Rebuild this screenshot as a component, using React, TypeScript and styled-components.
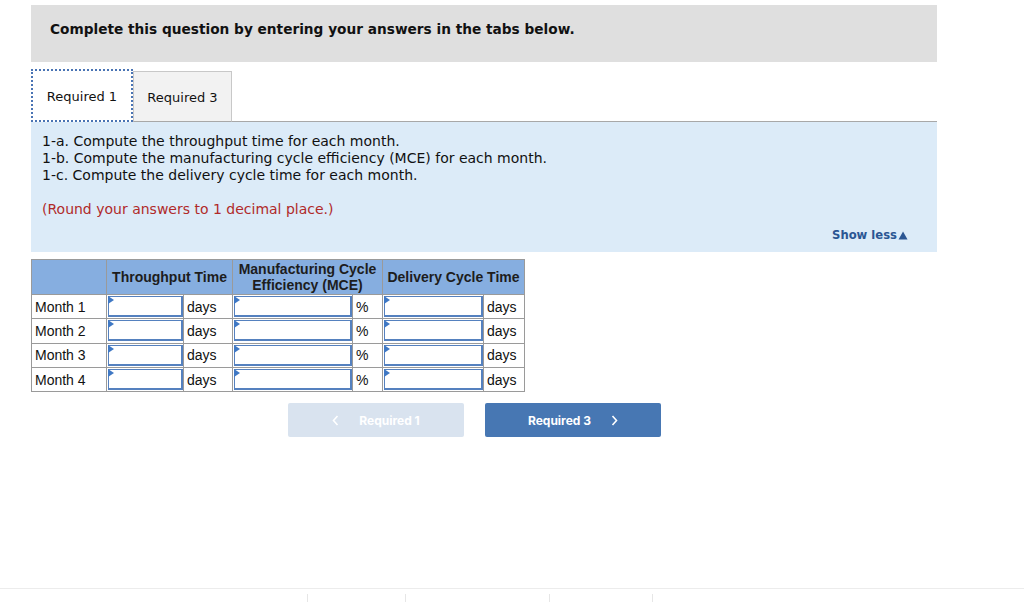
import React from "react";
import styled, { createGlobalStyle } from "styled-components";

const Global = createGlobalStyle`
  html, body { margin: 0; padding: 0; background: #fff; }
  body { font-family: "DejaVu Sans", Verdana, sans-serif; color: #111; }
  * { box-sizing: border-box; }
`;

const Page = styled.div`
  height: 602px;
  display: flex;
  flex-direction: column;
  overflow: hidden;
`;

const Main = styled.div`
  padding: 5px 0 0 31px;
  width: 937px;
  flex: 1;
`;

const Banner = styled.div`
  height: 57px;
  background: #dfdfdf;
  padding: 16px 0 0 19px;
  font-size: 13.7px;
  font-weight: bold;
  line-height: 17px;
  color: #111;
`;

const TabBar = styled.div`
  margin-top: 7px;
  display: flex;
  align-items: flex-end;
  height: 53px;
  border-bottom: 1px solid #a8a8a8;
`;

const Tab = styled.div<{ $active?: boolean }>`
  height: ${(p) => (p.$active ? "53px" : "51px")};
  margin-bottom: -1px;
  display: flex;
  align-items: center;
  justify-content: center;
  font-size: 13px;
  color: #111;
  background: ${(p) => (p.$active ? "#fff" : "#f2f2f2")};
  border: ${(p) => (p.$active ? "2px dotted #4a74b4" : "1px solid #c8c8c8")};
  border-bottom: ${(p) => (p.$active ? "2px dotted #4a74b4" : "1px solid #a8a8a8")};
  width: ${(p) => (p.$active ? "102px" : "99px")};
  padding-top: 2px;
`;

const Panel = styled.div`
  background: #dcebf8;
  height: 130px;
  padding: 11px 29px 0 11px;
  font-size: 14px;
  line-height: 17px;
  display: flex;
  flex-direction: column;
`;

const Line = styled.div``;

const Hint = styled.div`
  margin-top: 17px;
  color: #b02a2a;
`;

const ShowLess = styled.div`
  margin-top: auto;
  margin-bottom: 8px;
  align-self: flex-end;
  font-family: "DejaVu Sans", Verdana, sans-serif;
  font-weight: 700;
  font-size: 11.6px;
  color: #2b5693;
  display: flex;
  align-items: center;
  gap: 1px;
`;

const Table = styled.table`
  margin-top: 7px;
  border-collapse: collapse;
  font-family: "Liberation Sans", Arial, sans-serif;
  font-size: 14px;
  color: #111;
  border: 1px solid #8c8c8c;
`;

const Th = styled.th`
  background: #86aee0;
  border: 1px solid #9a9a9a;
  height: 35px;
  padding: 0 3px;
  font-weight: bold;
  font-size: 14px;
  line-height: 16px;
  color: #1d1d1d;
  text-align: center;
  white-space: nowrap;
`;

const Td = styled.td<{ $w?: number }>`
  border: 1px solid #9a9a9a;
  height: 24.3px;
  padding: 0 3px;
  width: ${(p) => (p.$w ? `${p.$w}px` : "auto")};
  white-space: nowrap;
  line-height: 16px;
`;

const InputTd = styled.td<{ $w: number }>`
  border: 1px solid #9a9a9a;
  width: ${(p) => p.$w}px;
  padding: 1px 0 1px 1px;
  height: 24.3px;
`;

const InputBox = styled.div`
  position: relative;
  height: 21px;
  border: 2px solid #5581bf;
  border-top-width: 1px;
  border-left-width: 1px;
  background: #fff;
`;

const Flag = styled.span`
  position: absolute;
  top: -1px;
  left: -1px;
  width: 0;
  height: 0;
  border-top: 4px solid transparent;
  border-bottom: 4px solid transparent;
  border-left: 6px solid #3f78c4;
`;

const NavRow = styled.div`
  margin-top: 11px;
  padding-left: 257px;
  display: flex;
  gap: 21px;
`;

const NavButton = styled.button<{ $disabled?: boolean }>`
  width: 176px;
  height: 34px;
  border: none;
  border-radius: 2px;
  background: ${(p) => (p.$disabled ? "#d9e3ef" : "#4777b3")};
  color: #fff;
  font-family: Inter, "Open Sans", sans-serif;
  font-weight: 700;
  font-size: 12px;
  display: flex;
  align-items: center;
  justify-content: center;
  gap: 20px;
  padding: 0;
`;

const Footer = styled.div`
  height: 14px;
  border-top: 1px solid #ececec;
  display: flex;
  padding-top: 5px;
`;

const Tick = styled.span<{ $ml: number }>`
  margin-left: ${(p) => p.$ml}px;
  width: 1px;
  height: 9px;
  background: #e6e6e6;
`;

const Chevron = ({ dir }: { dir: "l" | "r" }) => (
  <svg width="7" height="11" viewBox="0 0 7 11">
    <path
      d={dir === "l" ? "M5.5 1 L1.5 5.5 L5.5 10" : "M1.5 1 L5.5 5.5 L1.5 10"}
      fill="none"
      stroke="#fff"
      strokeWidth="1.6"
    />
  </svg>
);

const Input = ({ w }: { w: number }) => (
  <InputTd $w={w}>
    <InputBox>
      <Flag />
    </InputBox>
  </InputTd>
);

const months = ["Month 1", "Month 2", "Month 3", "Month 4"];

export default function App() {
  return (
    <Page>
      <Global />
      <Main>
        <Banner>Complete this question by entering your answers in the tabs below.</Banner>
        <TabBar>
          <Tab $active>Required 1</Tab>
          <Tab>Required 3</Tab>
        </TabBar>
        <Panel>
          <Line>1-a. Compute the throughput time for each month.</Line>
          <Line>1-b. Compute the manufacturing cycle efficiency (MCE) for each month.</Line>
          <Line>1-c. Compute the delivery cycle time for each month.</Line>
          <Hint>(Round your answers to 1 decimal place.)</Hint>
          <ShowLess>
            Show less
            <svg width="10" height="9" viewBox="0 0 10 9">
              <path d="M5 0.5 L9.5 8.5 L0.5 8.5 Z" fill="#2b5693" />
            </svg>
          </ShowLess>
        </Panel>
        <Table>
          <thead>
            <tr>
              <Th style={{ width: 75 }} />
              <Th colSpan={2}>Throughput Time</Th>
              <Th colSpan={2}>
                Manufacturing Cycle
                <br />
                Efficiency (MCE)
              </Th>
              <Th colSpan={2}>Delivery Cycle Time</Th>
            </tr>
          </thead>
          <tbody>
            {months.map((m) => (
              <tr key={m}>
                <Td $w={75}>{m}</Td>
                <Input w={77} />
                <Td $w={49}>days</Td>
                <Input w={120} />
                <Td $w={30}>%</Td>
                <Input w={101} />
                <Td $w={41}>days</Td>
              </tr>
            ))}
          </tbody>
        </Table>
        <NavRow>
          <NavButton $disabled>
            <Chevron dir="l" />
            Required 1
          </NavButton>
          <NavButton>
            Required 3
            <Chevron dir="r" />
          </NavButton>
        </NavRow>
      </Main>
      <Footer>
        <Tick $ml={307} />
        <Tick $ml={97} />
        <Tick $ml={143} />
        <Tick $ml={102} />
      </Footer>
    </Page>
  );
}
